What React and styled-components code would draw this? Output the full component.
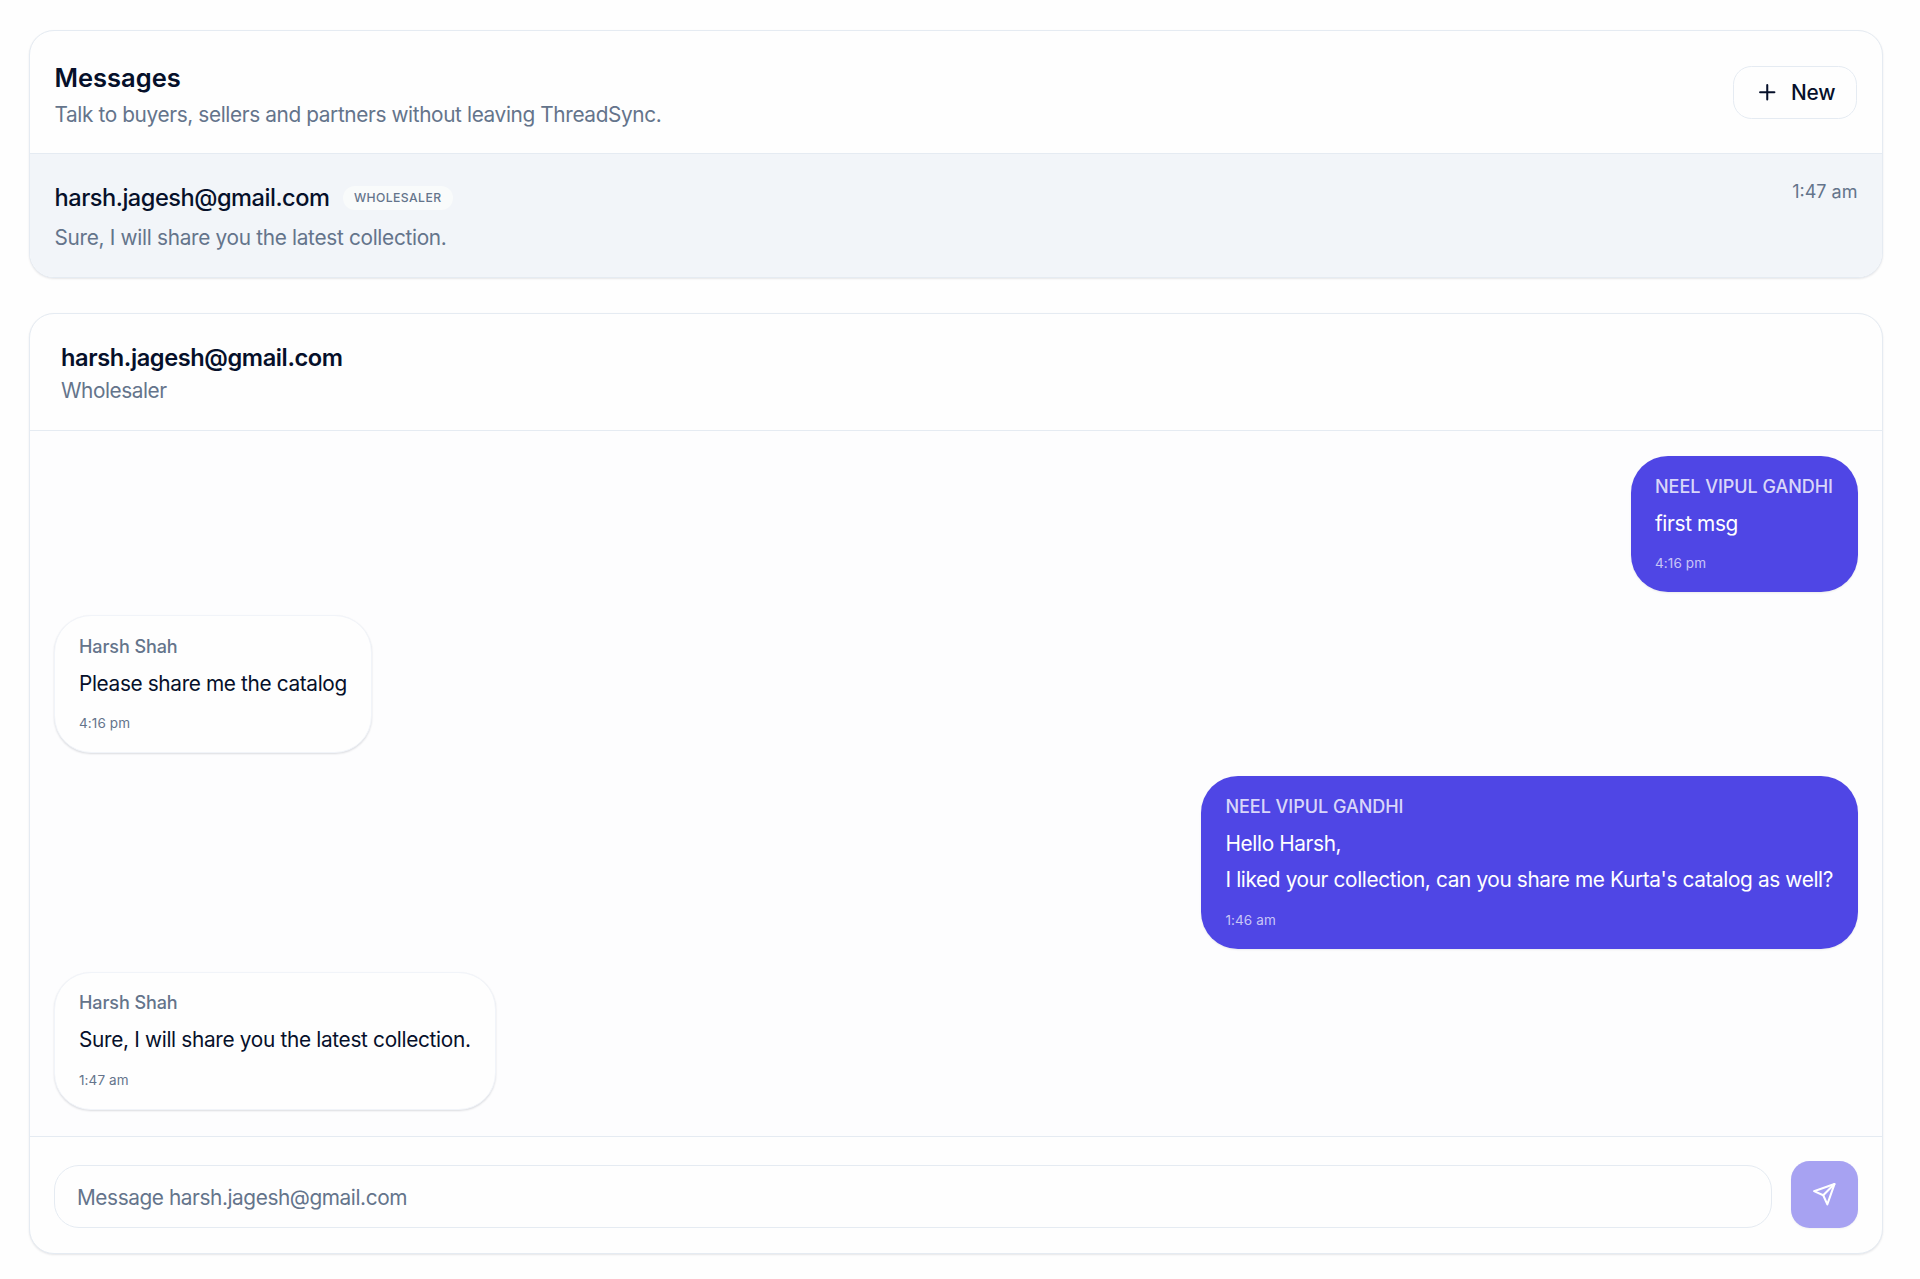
import React from "react";
import styled, { createGlobalStyle } from "styled-components";
import { Plus } from "lucide-react";

const colors = {
  text: "#06102a",
  muted: "#64748b",
  border: "#e5ebf2",
  selected: "#f2f5f9",
  primary: "#4f46e5"
};

const GlobalStyle = createGlobalStyle`
  *, *::before, *::after {
    box-sizing: border-box;
  }
  body {
    margin: 0;
    background: #fefefe;
    color: ${colors.text};
    font-family: Inter, "Liberation Sans", sans-serif;
  }
  h1, h2, p {
    margin: 0;
  }
  button, input {
    font-family: inherit;
  }
`;

const Page = styled.main`
  display: flex;
  flex-direction: column;
  gap: 35px;
  padding: 30px 37px 25px 29px;
`;

const Card = styled.section`
  display: flex;
  flex-direction: column;
  height: ${(p) => p.$height}px;
  overflow: hidden;
  background: #fefefe;
  border: 1px solid ${colors.border};
  border-radius: 25px;
  box-shadow: 0 1px 2px rgba(15, 23, 42, 0.1);
`;

const ListHeader = styled.header`
  display: flex;
  align-items: center;
  justify-content: space-between;
  height: 123px;
  padding: 6px 25px 0 24.5px;
  border-bottom: 1px solid ${colors.border};
`;

const Title = styled.h1`
  font-size: 25.5px;
  font-weight: 600;
  line-height: 34px;
`;

const Muted = styled.p`
  margin-top: ${(p) => p.$top || 0}px;
  color: ${colors.muted};
  font-size: 20.8px;
  line-height: 30px;
  letter-spacing: ${(p) => p.$track}px;
  white-space: nowrap;
`;

const NewButton = styled.button`
  display: flex;
  align-items: center;
  gap: 11.5px;
  height: 53px;
  margin-bottom: 6px;
  padding: 0 20.5px;
  color: ${colors.text};
  background: #fefefe;
  border: 1px solid ${colors.border};
  border-radius: 18.5px;
  font-size: 20.8px;
  font-weight: 500;
  letter-spacing: -0.1px;
`;

const Conversation = styled.div`
  display: flex;
  flex: 1;
  justify-content: space-between;
  padding: 25px 24.5px 0;
  background: ${colors.selected};
`;

const NameLine = styled.div`
  display: flex;
  align-items: center;
  gap: 13.5px;
  height: 37px;
`;

const ContactName = styled.h2`
  font-size: 23.6px;
  font-weight: ${(p) => p.$weight};
  line-height: 36px;
  letter-spacing: ${(p) => p.$track}px;
`;

const Badge = styled.span`
  display: flex;
  align-items: center;
  height: 24px;
  padding: 0 11.5px 0 11px;
  color: ${colors.muted};
  background: #f9fbfb;
  border-radius: 12px;
  font-size: 12.2px;
  font-weight: 450;
  letter-spacing: 0.4px;
  text-transform: uppercase;
`;

const ListTime = styled.time`
  padding-top: 0.5px;
  color: ${colors.muted};
  font-size: 18px;
  line-height: 24px;
`;

const ThreadHeader = styled.header`
  height: 117px;
  padding: 26px 31px 0;
  border-bottom: 1px solid ${colors.border};
`;

const Thread = styled.div`
  display: flex;
  flex: 1;
  flex-direction: column;
  gap: 23px;
  padding: 25px 24.5px 0 24px;
  background: #fdfdfe;
`;

const Bubble = styled.article`
  align-self: ${(p) => (p.$mine ? "flex-end" : "flex-start")};
  padding: 18.5px ${(p) => (p.$mine ? 24.5 : 24)}px 19px 24px;
  color: ${(p) => (p.$mine ? "#fff" : colors.text)};
  background: ${(p) => (p.$mine ? colors.primary : "#fefefe")};
  border: ${(p) => (p.$mine ? "none" : "1px solid #f1f4f9")};
  border-radius: 37px;
  box-shadow: 0 1px 2px rgba(15, 23, 42, ${(p) => (p.$mine ? 0.08 : 0.14)});
`;

const Sender = styled.div`
  color: ${(p) => (p.$mine ? "rgba(255, 255, 255, 0.8)" : colors.muted)};
  font-size: 18px;
  font-weight: ${(p) => (p.$mine ? 450 : 500)};
  line-height: 24.5px;
  letter-spacing: ${(p) => (p.$mine ? -0.03 : -0.08)}px;
`;

const Body = styled.p`
  margin: 6.5px 0 11px;
  font-size: 20.8px;
  line-height: 36.5px;
  letter-spacing: ${(p) => p.$track}px;
  white-space: pre-line;
`;

const SentAt = styled.time`
  display: block;
  color: ${(p) => (p.$mine ? "rgba(255, 255, 255, 0.7)" : colors.muted)};
  font-size: 13.5px;
  line-height: 20px;
  letter-spacing: 0.1px;
`;

const Composer = styled.form`
  display: flex;
  align-items: flex-end;
  gap: 18.5px;
  height: 117px;
  padding: 0 24.5px 25px 24px;
  border-top: 1px solid ${colors.border};
`;

const MessageInput = styled.input`
  flex: 1;
  height: 63px;
  padding: 1px 22px 0;
  color: ${colors.text};
  background: #fefefe;
  border: 1px solid ${colors.border};
  border-radius: 25px;
  outline: none;
  font-size: 20.8px;
  letter-spacing: -0.42px;

  &::placeholder {
    color: ${colors.muted};
    opacity: 1;
  }
`;

const SendButton = styled.button`
  display: flex;
  align-items: center;
  justify-content: center;
  width: 67px;
  height: 67px;
  padding: 0;
  color: #fff;
  background: #a7a2f2;
  border: none;
  border-radius: 18.5px;
  box-shadow: 0 1px 2px rgba(15, 23, 42, 0.05);
`;

const contact = "harsh.jagesh@gmail.com";

const messages = [
  {
    mine: true,
    sender: "NEEL VIPUL GANDHI",
    body: "first msg",
    time: "4:16 pm",
    track: -0.35
  },
  {
    mine: false,
    sender: "Harsh Shah",
    body: "Please share me the catalog",
    time: "4:16 pm",
    track: -0.36
  },
  {
    mine: true,
    sender: "NEEL VIPUL GANDHI",
    body: "Hello Harsh,\nI liked your collection, can you share me Kurta's catalog as well?",
    time: "1:46 am",
    track: -0.37
  },
  {
    mine: false,
    sender: "Harsh Shah",
    body: "Sure, I will share you the latest collection.",
    time: "1:47 am",
    track: -0.32
  }
];

const SendIcon = () => (
  <svg
    width="24.5"
    height="24.5"
    viewBox="0 0 24 24"
    fill="none"
    stroke="currentColor"
    strokeWidth="2"
    strokeLinecap="round"
    strokeLinejoin="round"
  >
    <path d="m22 2-7 20-4-9-9-4Z" />
    <path d="M22 2 11 13" />
  </svg>
);

const App = () => (
  <>
    <GlobalStyle />
    <Page>
      <Card $height={248}>
        <ListHeader>
          <div>
            <Title>Messages</Title>
            <Muted $top={5} $track={-0.38}>
              Talk to buyers, sellers and partners without leaving ThreadSync.
            </Muted>
          </div>
          <NewButton type="button">
            <Plus size={24.5} />
            New
          </NewButton>
        </ListHeader>
        <Conversation>
          <div>
            <NameLine>
              <ContactName $weight={500} $track={-0.48}>
                {contact}
              </ContactName>
              <Badge>Wholesaler</Badge>
            </NameLine>
            <Muted $top={6.5} $track={-0.31}>
              Sure, I will share you the latest collection.
            </Muted>
          </div>
          <ListTime>1:47 am</ListTime>
        </Conversation>
      </Card>

      <Card $height={941}>
        <ThreadHeader>
          <ContactName $weight={600} $track={-0.4}>
            {contact}
          </ContactName>
          <Muted $track={-0.45}>Wholesaler</Muted>
        </ThreadHeader>
        <Thread>
          {messages.map(({ mine, sender, body, time, track }, index) => (
            <Bubble key={index} $mine={mine}>
              <Sender $mine={mine}>{sender}</Sender>
              <Body $track={track}>{body}</Body>
              <SentAt $mine={mine}>{time}</SentAt>
            </Bubble>
          ))}
        </Thread>
        <Composer onSubmit={(e) => e.preventDefault()}>
          <MessageInput placeholder={`Message ${contact}`} />
          <SendButton type="submit" aria-label="Send">
            <SendIcon />
          </SendButton>
        </Composer>
      </Card>
    </Page>
  </>
);

export default App;
